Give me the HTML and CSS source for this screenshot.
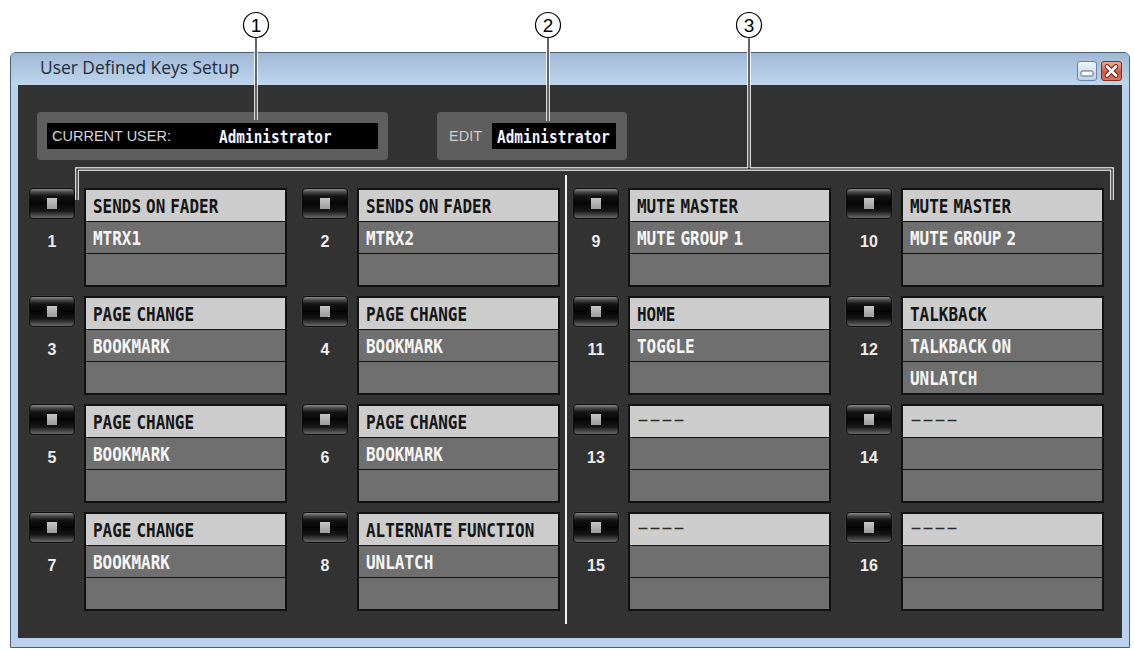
FILE: index.html
```html
<!DOCTYPE html>
<html>
<head>
<meta charset="utf-8">
<title>User Defined Keys Setup</title>
<link rel="stylesheet" href="styles.css">
</head>
<body>
<div class="page">
  <div class="window">
    <div class="titlebar">
      <span class="title">User Defined Keys Setup</span>
      <div class="winbtns">
        <span class="wbtn min"><svg width="18" height="18" viewBox="0 0 18 18"><rect x="3" y="9" width="12" height="5" rx="1.2" fill="#fff" stroke="#4f6682" stroke-width="1"/></svg></span>
        <span class="wbtn close"><svg width="19" height="18" viewBox="0 0 19 18"><path d="M5 4.5L14 13.5M14 4.5L5 13.5" stroke="#6e2418" stroke-width="4.6" stroke-linecap="round"/><path d="M5 4.5L14 13.5M14 4.5L5 13.5" stroke="#fff" stroke-width="2.6" stroke-linecap="round"/></svg></span>
      </div>
    </div>
    <div class="content">
      <div class="header">
        <div class="userbox">
          <div class="field">
            <span class="flabel">CURRENT USER:</span>
            <span class="fname">Administrator</span>
          </div>
        </div>
        <div class="editbox">
          <span class="editlabel">EDIT</span>
          <div class="field edit"><span class="fname">Administrator</span></div>
        </div>
      </div>
      <div class="keys">
        <div class="bank">
          <div class="key"><div class="kleft"><div class="kbtn"><span class="ksq"></span></div><div class="knum">1</div></div><div class="kbox"><div class="krow top"><span class="kt">SENDS ON FADER</span></div><div class="krow"><span class="kt">MTRX1</span></div><div class="krow"></div></div></div>
          <div class="key"><div class="kleft"><div class="kbtn"><span class="ksq"></span></div><div class="knum">2</div></div><div class="kbox"><div class="krow top"><span class="kt">SENDS ON FADER</span></div><div class="krow"><span class="kt">MTRX2</span></div><div class="krow"></div></div></div>
          <div class="key"><div class="kleft"><div class="kbtn"><span class="ksq"></span></div><div class="knum">3</div></div><div class="kbox"><div class="krow top"><span class="kt">PAGE CHANGE</span></div><div class="krow"><span class="kt">BOOKMARK</span></div><div class="krow"></div></div></div>
          <div class="key"><div class="kleft"><div class="kbtn"><span class="ksq"></span></div><div class="knum">4</div></div><div class="kbox"><div class="krow top"><span class="kt">PAGE CHANGE</span></div><div class="krow"><span class="kt">BOOKMARK</span></div><div class="krow"></div></div></div>
          <div class="key"><div class="kleft"><div class="kbtn"><span class="ksq"></span></div><div class="knum">5</div></div><div class="kbox"><div class="krow top"><span class="kt">PAGE CHANGE</span></div><div class="krow"><span class="kt">BOOKMARK</span></div><div class="krow"></div></div></div>
          <div class="key"><div class="kleft"><div class="kbtn"><span class="ksq"></span></div><div class="knum">6</div></div><div class="kbox"><div class="krow top"><span class="kt">PAGE CHANGE</span></div><div class="krow"><span class="kt">BOOKMARK</span></div><div class="krow"></div></div></div>
          <div class="key"><div class="kleft"><div class="kbtn"><span class="ksq"></span></div><div class="knum">7</div></div><div class="kbox"><div class="krow top"><span class="kt">PAGE CHANGE</span></div><div class="krow"><span class="kt">BOOKMARK</span></div><div class="krow"></div></div></div>
          <div class="key"><div class="kleft"><div class="kbtn"><span class="ksq"></span></div><div class="knum">8</div></div><div class="kbox"><div class="krow top"><span class="kt">ALTERNATE FUNCTION</span></div><div class="krow"><span class="kt">UNLATCH</span></div><div class="krow"></div></div></div>
        </div>
        <div class="sep"></div>
        <div class="bank">
          <div class="key"><div class="kleft"><div class="kbtn"><span class="ksq"></span></div><div class="knum">9</div></div><div class="kbox"><div class="krow top"><span class="kt">MUTE MASTER</span></div><div class="krow"><span class="kt">MUTE GROUP 1</span></div><div class="krow"></div></div></div>
          <div class="key"><div class="kleft"><div class="kbtn"><span class="ksq"></span></div><div class="knum">10</div></div><div class="kbox"><div class="krow top"><span class="kt">MUTE MASTER</span></div><div class="krow"><span class="kt">MUTE GROUP 2</span></div><div class="krow"></div></div></div>
          <div class="key"><div class="kleft"><div class="kbtn"><span class="ksq"></span></div><div class="knum">11</div></div><div class="kbox"><div class="krow top"><span class="kt">HOME</span></div><div class="krow"><span class="kt">TOGGLE</span></div><div class="krow"></div></div></div>
          <div class="key"><div class="kleft"><div class="kbtn"><span class="ksq"></span></div><div class="knum">12</div></div><div class="kbox"><div class="krow top"><span class="kt">TALKBACK</span></div><div class="krow"><span class="kt">TALKBACK ON</span></div><div class="krow"><span class="kt">UNLATCH</span></div></div></div>
          <div class="key"><div class="kleft"><div class="kbtn"><span class="ksq"></span></div><div class="knum">13</div></div><div class="kbox"><div class="krow top"><span class="dash">----</span></div><div class="krow"></div><div class="krow"></div></div></div>
          <div class="key"><div class="kleft"><div class="kbtn"><span class="ksq"></span></div><div class="knum">14</div></div><div class="kbox"><div class="krow top"><span class="dash">----</span></div><div class="krow"></div><div class="krow"></div></div></div>
          <div class="key"><div class="kleft"><div class="kbtn"><span class="ksq"></span></div><div class="knum">15</div></div><div class="kbox"><div class="krow top"><span class="dash">----</span></div><div class="krow"></div><div class="krow"></div></div></div>
          <div class="key"><div class="kleft"><div class="kbtn"><span class="ksq"></span></div><div class="knum">16</div></div><div class="kbox"><div class="krow top"><span class="dash">----</span></div><div class="krow"></div><div class="krow"></div></div></div>
        </div>
      </div>
    </div>
  </div>
  <svg class="annot" width="1134" height="651" viewBox="0 0 1134 651">
    <path d="M256 37.5V120M548 37.5V121M749 37.5V169M77 200V169H1112V200" fill="none" stroke="#fff" stroke-width="3.6"/>
    <path d="M256 37.5V120M548 37.5V121M749 37.5V169M77 200V169H1112V200" fill="none" stroke="#000" stroke-width="1.2"/>
    <g fill="#fff" stroke="#000" stroke-width="1.2">
      <circle cx="256" cy="25" r="12.5"/>
      <circle cx="548" cy="25" r="12.5"/>
      <circle cx="749" cy="25" r="12.5"/>
    </g>
    <g class="cnum" text-anchor="middle" fill="#000">
      <text x="256" y="32">1</text>
      <text x="548" y="32">2</text>
      <text x="749" y="32">3</text>
    </g>
  </svg>
</div>
</body>
</html>
```

FILE: styles.css
```css
* { box-sizing: border-box; margin: 0; padding: 0; }
html, body { width: 1134px; height: 651px; background: #fff; overflow: hidden; }
body { font-family: "Liberation Sans", Arial, sans-serif; }

.page { position: relative; width: 1134px; height: 651px; padding: 52px 0 0 10px; }

.window {
  width: 1120px; height: 596px;
  border: 1px solid #4d5f75;
  border-radius: 6px 6px 0 0;
  background: #b9d1ea;
  display: flex; flex-direction: column;
}
.titlebar {
  height: 32px; flex: none;
  display: flex; justify-content: space-between; align-items: flex-start;
  padding: 0 7px 0 29px;
  background: linear-gradient(#a0b9d6, #bfd5ec);
  border-radius: 5px 5px 0 0;
}
.title { font-family: "Open Sans", "Liberation Sans", sans-serif; font-size: 17.4px; line-height: 28px; color: #1d2c40; }
.winbtns { display: flex; gap: 4px; padding-top: 8px; }
.wbtn { width: 20px; height: 20px; border-radius: 3px; display: block; }
.wbtn svg { display: block; }
.min { background: linear-gradient(#eef4fa, #bdd0e5); border: 1px solid #6a84a3; }
.close { width: 21px; background: linear-gradient(#eda996, #cf5b43 55%, #d9735a); border: 1px solid #7d2f22; }

.content { flex: none; height: 553px; margin: 0 7px; background: #323232; padding-top: 27px; }

.header { display: flex; gap: 49px; margin-left: 19px; }
.userbox { width: 351px; height: 48px; background: #5e5e5e; border-radius: 4px; padding: 11px 10px; }
.editbox { width: 190px; height: 48px; background: #5e5e5e; border-radius: 4px; padding: 11px 11px 11px 12px; display: flex; align-items: center; }
.field { height: 26px; background: #000; display: flex; align-items: center; padding-left: 5px; overflow: visible; }
.flabel { width: 167px; flex: none; font-size: 14.5px; color: #d6d6d6; }
.editlabel { width: 43px; flex: none; font-size: 14.5px; color: #cdcdcd; }
.edit { width: 124px; flex: none; }
.fname {
  font-family: "DejaVu Sans Mono", monospace; font-weight: bold; font-size: 18px;
  color: #f4f2ff; display: inline-block; white-space: nowrap;
  transform: scaleX(.8); transform-origin: 0 50%;
}

.keys { display: flex; margin: 28px 0 0 11px; }
.bank { display: grid; grid-template-columns: 258px 258px; column-gap: 15px; row-gap: 9px; }
.sep { width: 2px; background: #f2f2f2; margin: -13px 6px -13px 5px; }

.key { display: flex; gap: 9px; height: 99px; }
.kleft { width: 46px; flex: none; display: flex; flex-direction: column; align-items: center; }
.kbtn {
  width: 46px; height: 31px; border-radius: 4px;
  border: 1px solid #0c0c0c;
  background: linear-gradient(#8c8c8c 0, #4a4a4a 3px, #141414 7px, #050505 50%, #161616 75%, #4c4c4c 92%, #6a6a6a 100%);
  box-shadow: 0 0 0 1px #3c3c3c;
  display: flex; align-items: center; justify-content: center;
}
.ksq { width: 10px; height: 11px; background: linear-gradient(#c6c6c6, #9c9c9c); margin-top: -1px; }
.knum { margin-top: 13px; font-size: 16px; font-weight: bold; color: #ececec; line-height: 20px; }
.kbox { width: 203px; flex: none; border: 2px solid #111; display: flex; flex-direction: column; }
.krow { height: 31px; flex: none; background: #6f6f6f; display: flex; align-items: center; padding-left: 7px; color: #f6f6f6; overflow: visible; }
.krow + .krow { border-top: 1px solid #111; height: 32px; }
.krow.top { background: #cdcdcd; color: #151515; }
.kt {
  font-family: "DejaVu Sans Mono", monospace; font-weight: bold; font-size: 19px;
  word-spacing: -5.5px;
  display: inline-block; white-space: nowrap;
  transform: scaleX(.84); transform-origin: 0 50%;
}
.dash {
  font-family: "Liberation Sans", Arial, sans-serif; font-size: 18px; color: #2a2a2a;
  display: inline-block; white-space: nowrap;
  transform: scaleX(2); transform-origin: 0 50%;
  margin-top: -3px;
}

.annot { position: absolute; left: 0; top: 0; pointer-events: none; }
.cnum { font-family: "Liberation Sans", Arial, sans-serif; font-size: 19px; }
```
